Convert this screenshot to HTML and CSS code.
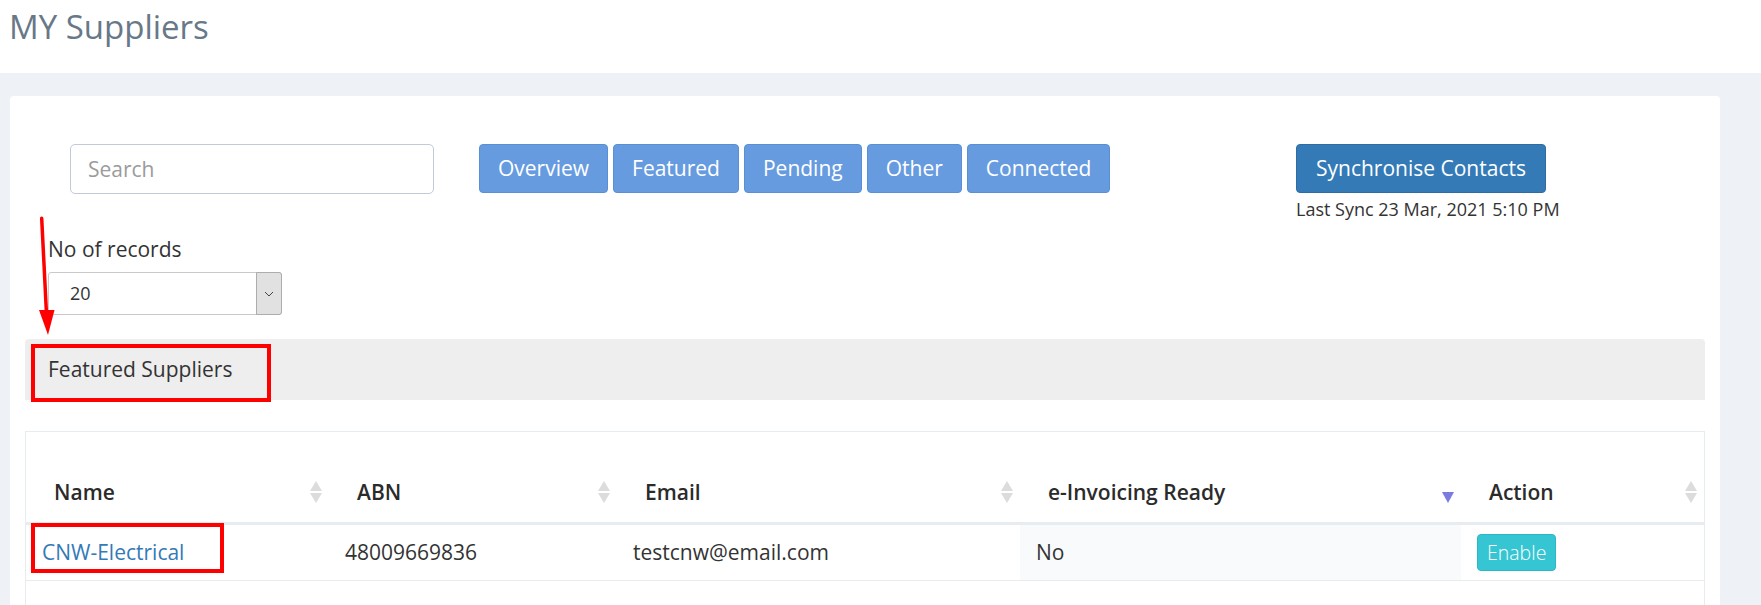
FILE: index.html
```html
<!DOCTYPE html>
<html lang="en">
<head>
<meta charset="utf-8">
<title>MY Suppliers</title>
<link rel="stylesheet" href="styles.css">
</head>
<body>
<header class="page-head">
  <h1 class="page-title">MY Suppliers</h1>
</header>
<main class="card">
  <svg class="anno-arrow" width="30" height="125" viewBox="0 0 30 125" aria-hidden="true">
    <line x1="11.7" y1="4.3" x2="16.4" y2="98" stroke="#ff0000" stroke-width="3.5" stroke-linecap="round"/>
    <polygon points="9,96 24.5,96 18,121" fill="#ff0000"/>
  </svg>

  <div class="toolbar">
    <input class="search" type="text" placeholder="Search">
    <div class="tabs">
      <button class="tab">Overview</button>
      <button class="tab">Featured</button>
      <button class="tab">Pending</button>
      <button class="tab">Other</button>
      <button class="tab">Connected</button>
    </div>
    <div class="sync">
      <button class="btn-sync">Synchronise Contacts</button>
      <div class="last-sync">Last Sync 23 Mar, 2021 5:10 PM</div>
    </div>
  </div>

  <div class="records">
    <label class="records-label">No of records</label>
    <div class="select">
      <span class="select-value">20</span>
      <span class="select-arrow">
        <svg width="10" height="6" viewBox="0 0 10 6"><polyline points="1,1 5,5 9,1" fill="none" stroke="#444" stroke-width="1"/></svg>
      </span>
    </div>
  </div>

  <div class="section-bar">
    <span class="section-title">Featured Suppliers</span>
    <span class="anno-box anno-bar"></span>
  </div>

  <div class="table-wrap">
    <table class="grid">
      <colgroup>
        <col class="c-name"><col class="c-abn"><col class="c-email"><col class="c-einv"><col class="c-action">
      </colgroup>
      <thead>
        <tr>
          <th><div class="th-inner"><span>Name</span><svg class="sort" width="12" height="22" viewBox="0 0 12 22"><polygon points="6,0 12,10 0,10" fill="#dcdcdc"/><polygon points="0,12 12,12 6,22" fill="#dcdcdc"/></svg></div></th>
          <th><div class="th-inner"><span>ABN</span><svg class="sort" width="12" height="22" viewBox="0 0 12 22"><polygon points="6,0 12,10 0,10" fill="#dcdcdc"/><polygon points="0,12 12,12 6,22" fill="#dcdcdc"/></svg></div></th>
          <th><div class="th-inner"><span>Email</span><svg class="sort" width="12" height="22" viewBox="0 0 12 22"><polygon points="6,0 12,10 0,10" fill="#dcdcdc"/><polygon points="0,12 12,12 6,22" fill="#dcdcdc"/></svg></div></th>
          <th><div class="th-inner"><span>e-Invoicing Ready</span><svg class="sort" width="12" height="22" viewBox="0 0 12 22"><polygon points="0,11 12,11 6,22" fill="#7b7ce0"/></svg></div></th>
          <th><div class="th-inner"><span>Action</span><svg class="sort" width="12" height="22" viewBox="0 0 12 22"><polygon points="6,0 12,10 0,10" fill="#dcdcdc"/><polygon points="0,12 12,12 6,22" fill="#dcdcdc"/></svg></div></th>
        </tr>
      </thead>
      <tbody>
        <tr>
          <td class="cell-name"><a class="link" href="#">CNW-Electrical</a><span class="anno-box anno-name"></span></td>
          <td>48009669836</td>
          <td>testcnw@email.com</td>
          <td class="sorted">No</td>
          <td class="cell-action"><button class="btn-enable">Enable</button></td>
        </tr>
      </tbody>
    </table>
  </div>
</main>
</body>
</html>
```

FILE: styles.css
```css
* { box-sizing: border-box; }

html, body {
  margin: 0;
  padding: 0;
}

body {
  background: #eef1f5;
  font-family: "Open Sans", "Noto Sans", "Liberation Sans", sans-serif;
  color: #333;
  overflow: hidden;
  height: 605px;
}

.page-head {
  background: #fff;
  height: 73px;
  padding: 7px 0 0 9px;
}

.page-title {
  margin: 0;
  font-size: 33px;
  line-height: 40px;
  font-weight: 400;
  color: #687887;
}

.card {
  position: relative;
  background: #fff;
  margin: 23px 41px 0 10px;
  border-radius: 4px 4px 0 0;
  padding: 0 15px 60px;
}

.anno-arrow {
  position: absolute;
  left: 20px;
  top: 118px;
  overflow: visible;
}

.toolbar {
  padding-top: 48px;
  padding-left: 45px;
  display: grid;
  grid-template-columns: 364px 772px auto;
  column-gap: 45px;
  align-items: start;
}

.search {
  width: 364px;
  height: 50px;
  border: 1px solid #c2cad8;
  border-radius: 5px;
  padding: 0 17px;
  font-family: inherit;
  font-size: 21px;
  color: #555;
  outline: none;
}

.search::placeholder { color: #9b9b9b; }

.tabs {
  display: flex;
  gap: 5px;
}

.tab {
  font-family: inherit;
  font-size: 21px;
  line-height: 31px;
  padding: 8px 18px;
  color: #fff;
  background: #669be0;
  border: 1px solid #5a8fd6;
  border-radius: 4px;
  cursor: pointer;
}

.sync {
  display: flex;
  flex-direction: column;
  align-items: flex-start;
}

.btn-sync {
  font-family: inherit;
  font-size: 21px;
  line-height: 31px;
  padding: 8px 19px;
  color: #fff;
  background: #337ab7;
  border: 1px solid #2e6da4;
  border-radius: 4px;
  cursor: pointer;
}

.last-sync {
  margin-top: 4px;
  font-size: 18px;
  line-height: 25px;
  color: #333;
}

.records {
  margin-top: 12px;
  padding-left: 23px;
}

.records-label {
  display: block;
  font-size: 21px;
  line-height: 30px;
  margin-bottom: 8px;
  color: #333;
}

.select {
  display: flex;
  width: 234px;
  height: 43px;
  border: 1px solid #c9c9c9;
  border-radius: 3px;
  background: #fff;
}

.select-value {
  flex: 1;
  padding-left: 21px;
  font-size: 18px;
  line-height: 41px;
  color: #333;
}

.select-arrow {
  width: 26px;
  margin: -1px -1px -1px 0;
  background: #e1e1e1;
  border: 1px solid #adadad;
  border-radius: 0 3px 3px 0;
  display: flex;
  align-items: center;
  justify-content: center;
}

.section-bar {
  position: relative;
  margin-top: 24px;
  height: 61px;
  background: #eeeeee;
  border-radius: 4px 4px 0 0;
  padding: 15px 0 0 23px;
}

.section-title {
  font-size: 21px;
  line-height: 30px;
  color: #333;
}

.anno-box {
  position: absolute;
  border: 4px solid #ff0000;
  pointer-events: none;
}

.anno-bar {
  left: 6px;
  top: 5px;
  width: 240px;
  height: 58px;
}

.table-wrap {
  margin-top: 31px;
  border: 1px solid #e7ecf1;
  border-bottom: none;
  height: 200px;
}

.grid {
  width: 100%;
  table-layout: fixed;
  border-collapse: separate;
  border-spacing: 0;
}

.c-name { width: 303px; }
.c-abn { width: 288px; }
.c-email { width: 403px; }
.c-einv { width: 441px; }
.c-action { width: 243px; }

.grid th {
  text-align: left;
  font-weight: 600;
  font-size: 21px;
  line-height: 30px;
  color: #2b2b2b;
  padding: 45px 7px 15px 28px;
  border-bottom: 3px solid #e7ecf1;
}

.th-inner {
  display: flex;
  justify-content: space-between;
  align-items: center;
}

.sort { flex: none; display: block; }

.grid td {
  font-size: 21px;
  line-height: 30px;
  color: #333;
  padding: 12px 16px 13px;
  border-bottom: 1px solid #e7ecf1;
  vertical-align: middle;
}

.grid td.sorted { background: #f9fafc; }

.grid td.cell-action { padding: 9px 16px; }

.cell-name { position: relative; }

.link {
  color: #337ab7;
  text-decoration: none;
}

.anno-name {
  left: 5px;
  top: -2px;
  width: 193px;
  height: 50px;
}

.btn-enable {
  font-family: inherit;
  font-size: 19.5px;
  font-weight: 300;
  line-height: 27px;
  padding: 4px 9px;
  color: #fff;
  background: #36c6d3;
  border: 1px solid #2bb8c4;
  border-radius: 4px;
  cursor: pointer;
  display: inline-block;
  vertical-align: middle;
}
```
